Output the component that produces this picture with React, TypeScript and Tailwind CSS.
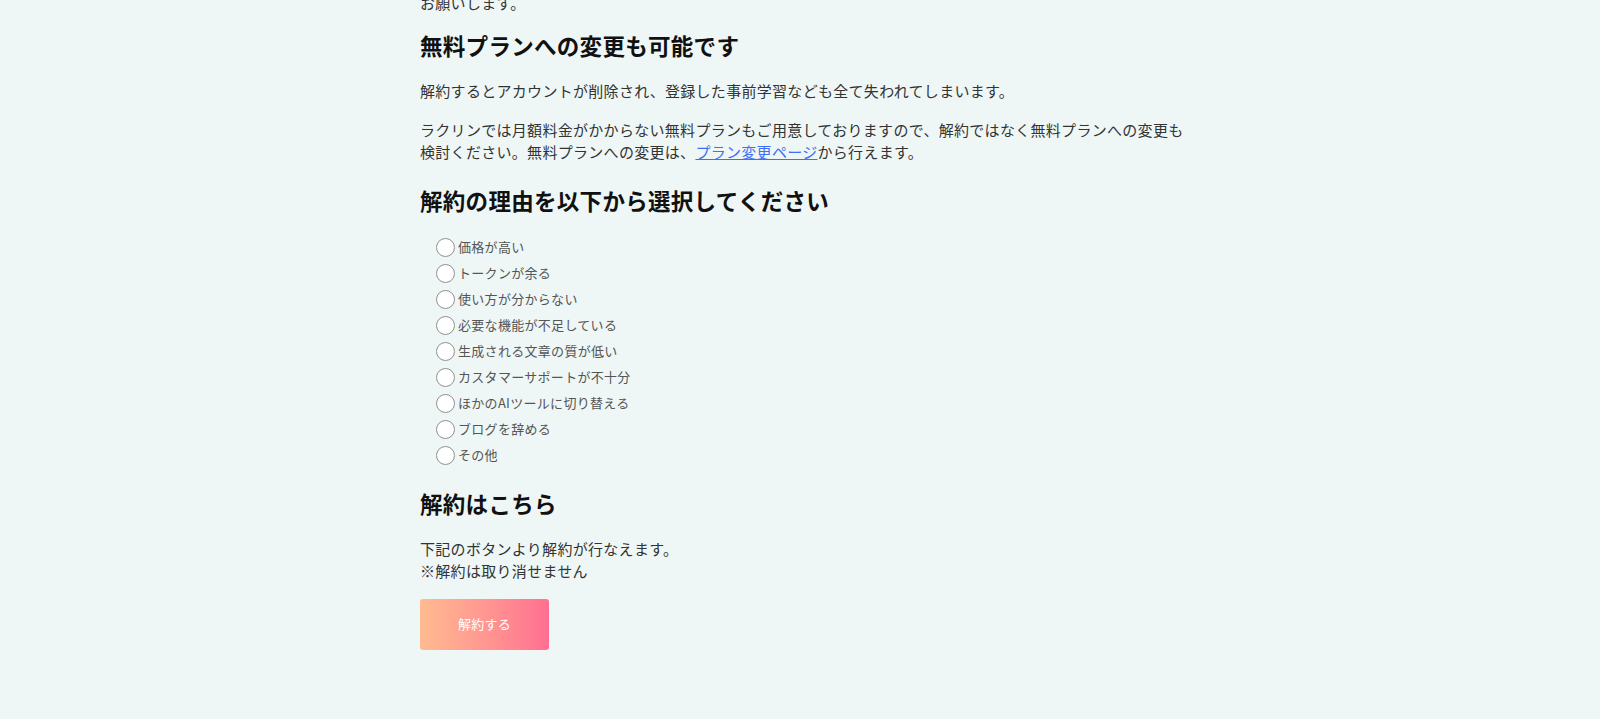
import React, { useState } from 'react';

const reasons = [
  '価格が高い',
  'トークンが余る',
  '使い方が分からない',
  '必要な機能が不足している',
  '生成される文章の質が低い',
  'カスタマーサポートが不十分',
  'ほかのAIツールに切り替える',
  'ブログを辞める',
  'その他',
];

const App: React.FC = () => {
  const [selected, setSelected] = useState<string | null>(null);

  return (
    <div
      className="min-h-[719px] bg-[#eef7f6] overflow-hidden"
      style={{ fontFamily: '"Noto Sans CJK JP", "Noto Sans", sans-serif' }}
    >
      <div className="w-[760px] mx-auto text-[15px] leading-[22.5px] tracking-[0.02em] text-[#333]">
        {/* tail of the previous section, scrolled off the top */}
        <p className="-mt-[8px]">お願いします。</p>

        <h2 className="mt-[15px] text-[22.5px] leading-[31.5px] font-bold text-[#111]">
          無料プランへの変更も可能です
        </h2>
        <p className="mt-[19px]">
          解約するとアカウントが削除され、登録した事前学習なども全て失われてしまいます。
        </p>
        <p className="mt-[16px] -mr-[8px]">
          ラクリンでは月額料金がかからない無料プランもご用意しておりますので、解約ではなく無料プランへの変更も検討ください。無料プランへの変更は、
          <a href="#" className="text-[#3f6ff5] underline">
            プラン変更ページ
          </a>
          から行えます。
        </p>

        <h2 className="mt-[21px] text-[22.5px] leading-[31.5px] font-bold text-[#111]">
          解約の理由を以下から選択してください
        </h2>
        <ul className="mt-[18px] pl-4">
          {reasons.map((r) => (
            <li key={r}>
              <label
                className="flex items-center h-[26px] cursor-pointer"
                onClick={() => setSelected(r)}
              >
                <span className="w-[19px] h-[19px] rounded-full border border-[#8f8f8f] bg-white flex items-center justify-center">
                  {selected === r && <span className="w-[9px] h-[9px] rounded-full bg-[#555]" />}
                </span>
                <span className="ml-[3px] text-[13px] text-[#555]">{r}</span>
              </label>
            </li>
          ))}
        </ul>

        <h2 className="mt-[20px] text-[22.5px] leading-[31.5px] font-bold text-[#111]">
          解約はこちら
        </h2>
        <p className="mt-[18px]">
          下記のボタンより解約が行なえます。
          <br />
          ※解約は取り消せません
        </p>
        <button className="mt-[16px] w-[129px] h-[51px] rounded-[3px] bg-gradient-to-r from-[#ffbb90] to-[#ff6f91] text-white text-[13px]">
          解約する
        </button>
      </div>
    </div>
  );
};

export default App;
